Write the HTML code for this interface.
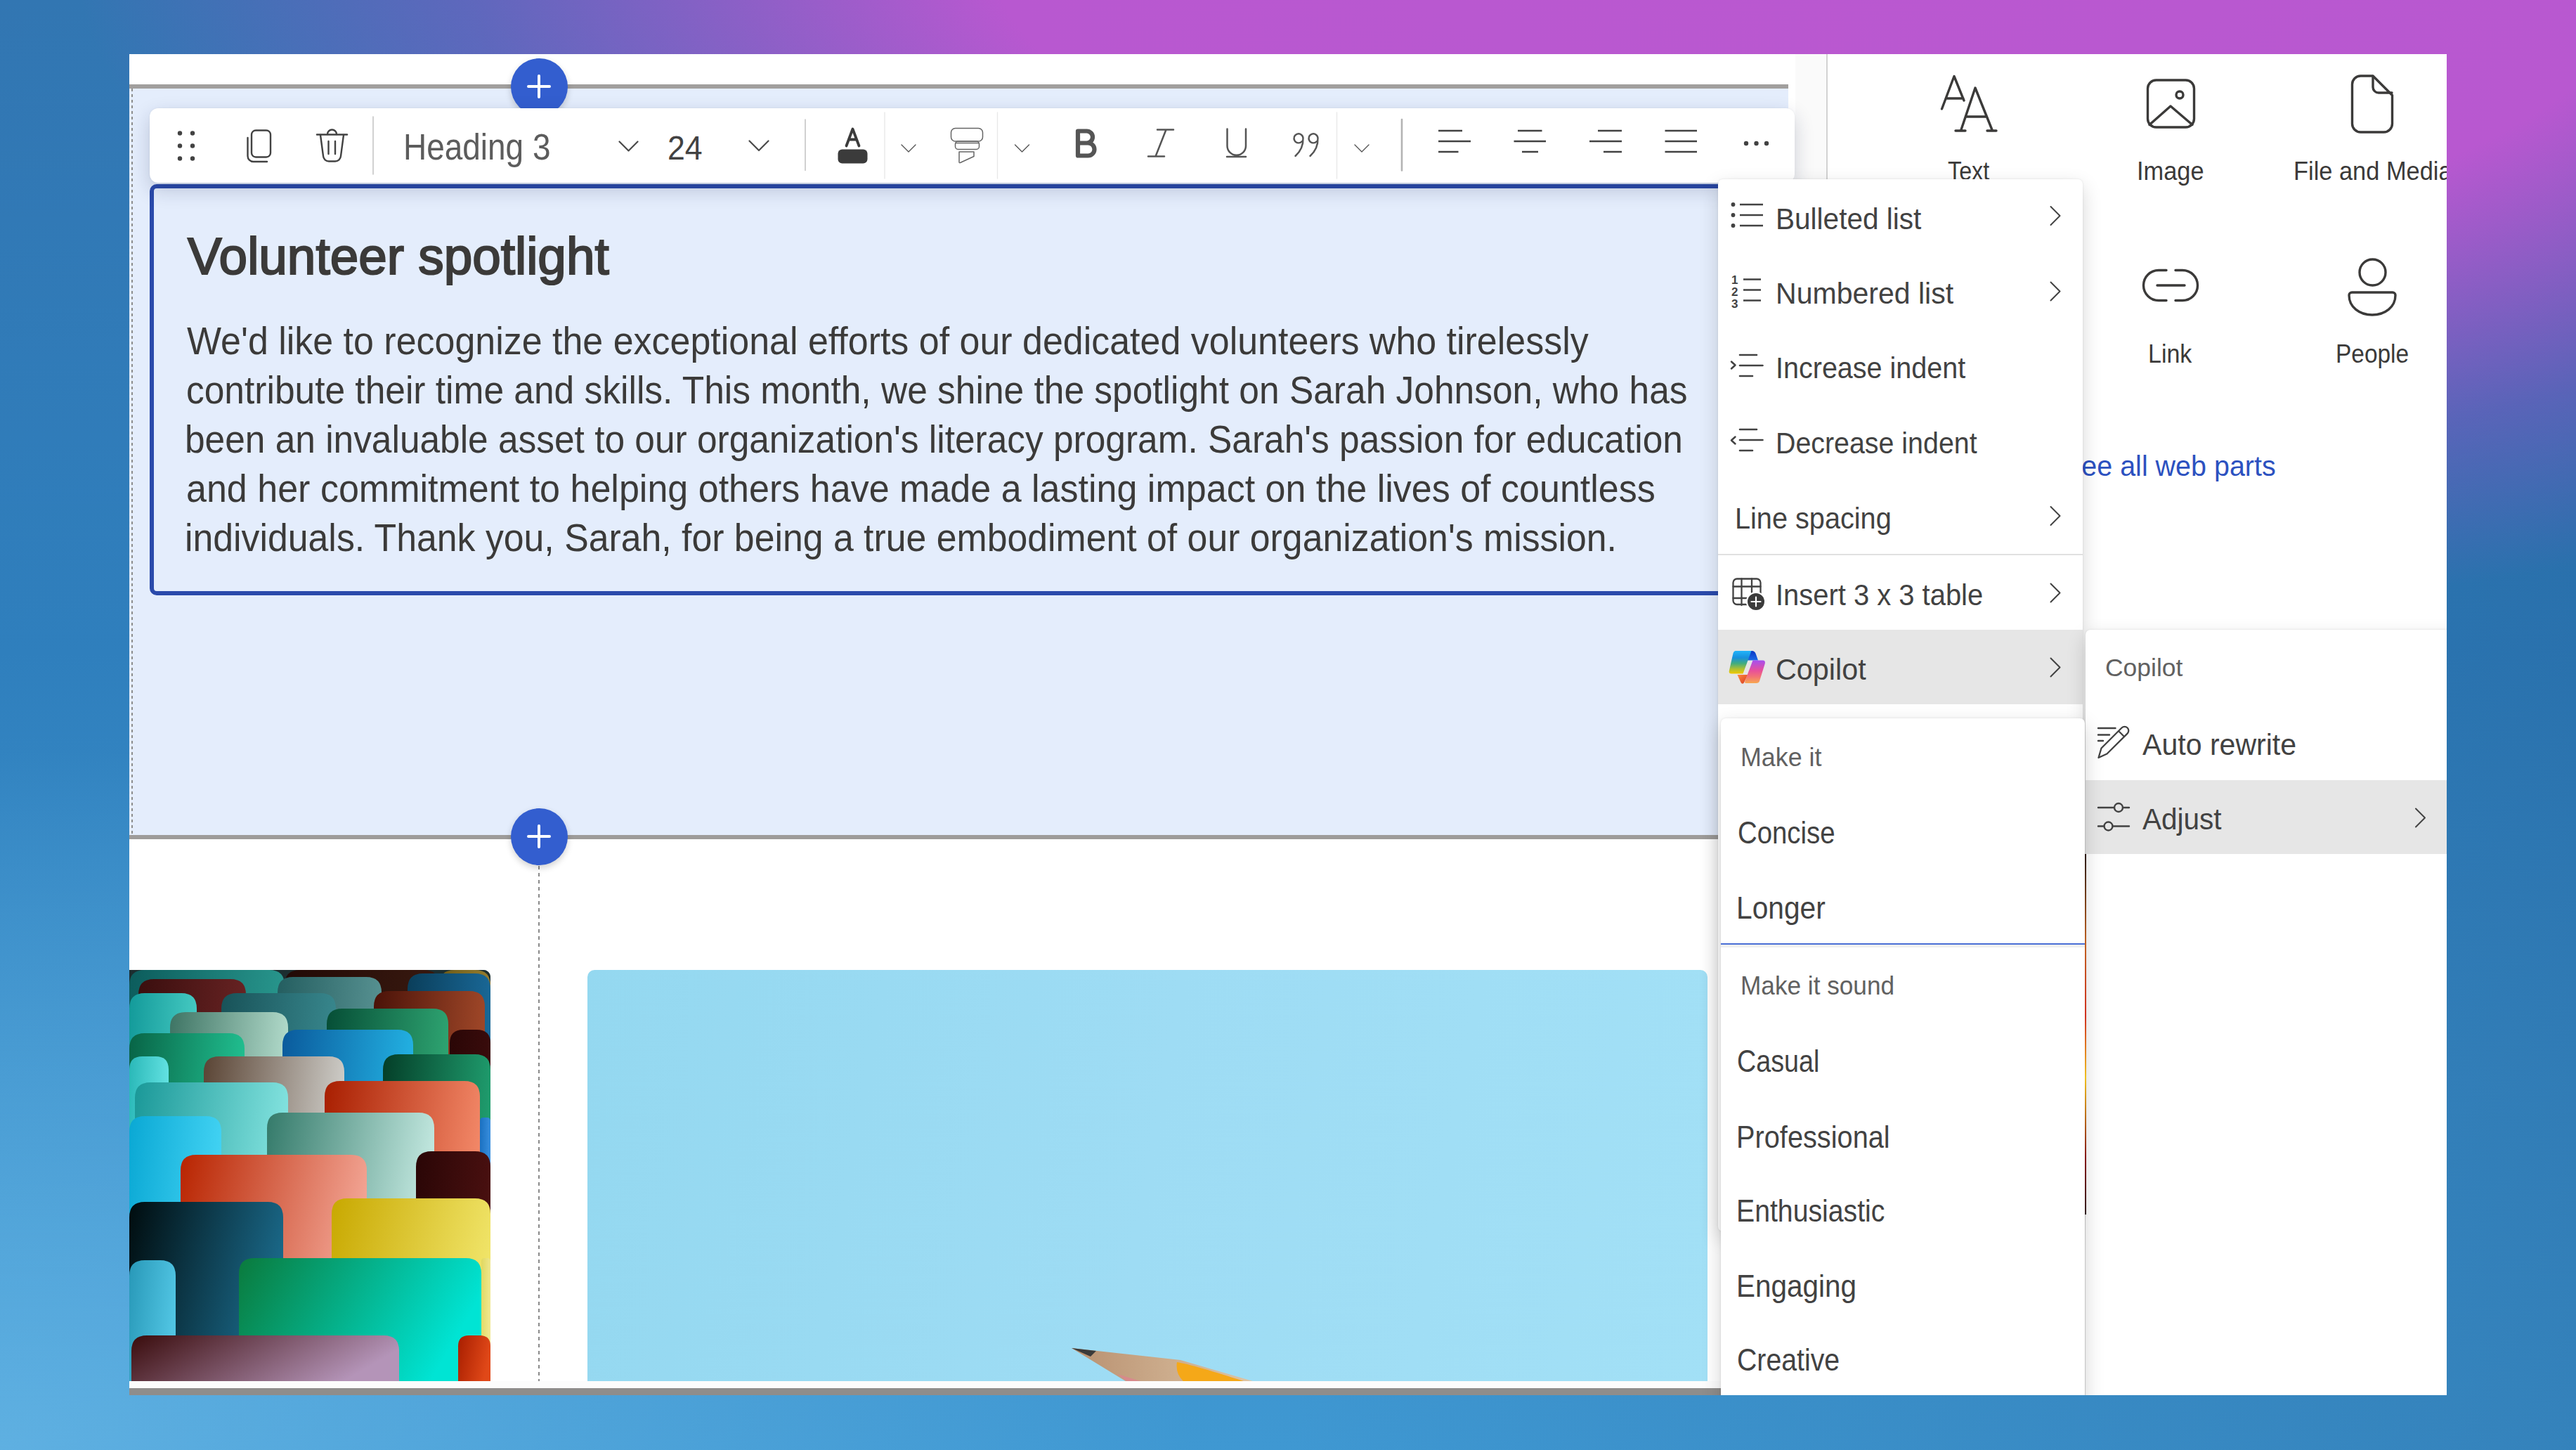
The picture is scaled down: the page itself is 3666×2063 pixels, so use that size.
<!DOCTYPE html><html><head><meta charset="utf-8"><style>

*{margin:0;padding:0;box-sizing:border-box}
html,body{width:3666px;height:2063px;overflow:hidden}
body{position:relative;font-family:"Liberation Sans",sans-serif;
background:
 radial-gradient(ellipse 2500px 1000px at 2600px -100px, rgba(186,88,208,1) 0%, rgba(184,88,208,1) 48%, rgba(160,82,204,0.4) 78%, rgba(150,80,200,0) 100%),
 linear-gradient(90deg, rgba(30,85,140,0) 50%, rgba(30,85,140,0.32) 100%),
 radial-gradient(ellipse 1700px 1000px at 0px 2063px, rgba(100,180,228,0.85) 0%, rgba(100,180,228,0.4) 50%, rgba(100,180,228,0) 100%),
 linear-gradient(180deg, #3276b2 0%, #2f7fbd 45%, #3a8fca 75%, #3f98d2 100%);}
.a{position:absolute}
.t{position:absolute;white-space:nowrap;transform-origin:0 0}
#clip{position:absolute;left:184px;top:77px;width:3298px;height:1908px;overflow:hidden;background:#fff}
#pg{position:absolute;left:-184px;top:-77px;width:3666px;height:2063px}
svg.l{position:absolute;left:0;top:0;width:3666px;height:2063px;overflow:visible}

</style></head><body><div id="clip"><div id="pg">
<div class="a" style="left:184px;top:120px;width:2361px;height:6px;background:#a19f9d"></div>
<div class="a" style="left:184px;top:126px;width:2361px;height:1062px;background:#e4edfc"></div>
<div class="a" style="left:184px;top:1188px;width:2361px;height:6px;background:#9e9c9a"></div>
<div class="a" style="left:2555px;top:77px;width:44px;height:1908px;background:#fafafa"></div>
<div class="a" style="left:2599px;top:77px;width:2px;height:1908px;background:#d2d2d2"></div>
<div class="a" style="left:186.5px;top:126px;width:2px;height:1062px;background:repeating-linear-gradient(#8e8e8e 0 4px,transparent 4px 8px)"></div>
<div class="a" style="left:766px;top:1232px;width:2px;height:733px;background:repeating-linear-gradient(#8a8a8a 0 5px,transparent 5px 10px)"></div>
<div class="a" style="left:184px;top:1380px;width:514px;height:585px;border-radius:0 10px 0 0;overflow:hidden;background:#1a3a3a"><svg class="l" style="left:-184px;top:-1380px" viewBox="0 0 3666 2063"><defs><linearGradient id="ch0" x1="0" y1="0" x2="1" y2="0.3"><stop offset="0" stop-color="#0c5c5c"/><stop offset="1" stop-color="#2a9a90"/></linearGradient><linearGradient id="ch1" x1="0" y1="0" x2="1" y2="0.3"><stop offset="0" stop-color="#220a06"/><stop offset="1" stop-color="#3a1a10"/></linearGradient><linearGradient id="ch2" x1="0" y1="0" x2="1" y2="0.3"><stop offset="0" stop-color="#6a5a18"/><stop offset="1" stop-color="#9a8030"/></linearGradient><linearGradient id="ch3" x1="0" y1="0" x2="1" y2="0.3"><stop offset="0" stop-color="#3a0e0e"/><stop offset="1" stop-color="#6a2424"/></linearGradient><linearGradient id="ch4" x1="0" y1="0" x2="1" y2="0.3"><stop offset="0" stop-color="#245e60"/><stop offset="1" stop-color="#5a9494"/></linearGradient><linearGradient id="ch5" x1="0" y1="0" x2="1" y2="0.3"><stop offset="0" stop-color="#0a3e5a"/><stop offset="1" stop-color="#1a6a9a"/></linearGradient><linearGradient id="ch6" x1="0" y1="0" x2="1" y2="0.3"><stop offset="0" stop-color="#139a9a"/><stop offset="1" stop-color="#48ccc4"/></linearGradient><linearGradient id="ch7" x1="0" y1="0" x2="1" y2="0.3"><stop offset="0" stop-color="#185258"/><stop offset="1" stop-color="#3a8a90"/></linearGradient><linearGradient id="ch8" x1="0" y1="0" x2="1" y2="0.3"><stop offset="0" stop-color="#4a1208"/><stop offset="1" stop-color="#a44a2a"/></linearGradient><linearGradient id="ch9" x1="0" y1="0" x2="1" y2="0.3"><stop offset="0" stop-color="#3e7464"/><stop offset="1" stop-color="#b8e0d0"/></linearGradient><linearGradient id="ch10" x1="0" y1="0" x2="1" y2="0.3"><stop offset="0" stop-color="#064e36"/><stop offset="1" stop-color="#30a874"/></linearGradient><linearGradient id="ch11" x1="0" y1="0" x2="1" y2="0.3"><stop offset="0" stop-color="#2a0606"/><stop offset="1" stop-color="#3a0c0c"/></linearGradient><linearGradient id="ch12" x1="0" y1="0" x2="1" y2="0.3"><stop offset="0" stop-color="#086446"/><stop offset="1" stop-color="#22c494"/></linearGradient><linearGradient id="ch13" x1="0" y1="0" x2="1" y2="0.3"><stop offset="0" stop-color="#0a5a9c"/><stop offset="1" stop-color="#24b6e6"/></linearGradient><linearGradient id="ch14" x1="0" y1="0" x2="1" y2="0.3"><stop offset="0" stop-color="#043e28"/><stop offset="1" stop-color="#20a070"/></linearGradient><linearGradient id="ch15" x1="0" y1="0" x2="1" y2="0.3"><stop offset="0" stop-color="#2ab8b8"/><stop offset="1" stop-color="#66e4e4"/></linearGradient><linearGradient id="ch16" x1="0" y1="0" x2="1" y2="0.3"><stop offset="0" stop-color="#5a4434"/><stop offset="1" stop-color="#d4d4d0"/></linearGradient><linearGradient id="ch17" x1="0" y1="0" x2="1" y2="0.3"><stop offset="0" stop-color="#a81e00"/><stop offset="1" stop-color="#f48a6a"/></linearGradient><linearGradient id="ch18" x1="0" y1="0" x2="1" y2="0.3"><stop offset="0" stop-color="#1a9898"/><stop offset="1" stop-color="#88e6e2"/></linearGradient><linearGradient id="ch19" x1="0" y1="0" x2="1" y2="0.3"><stop offset="0" stop-color="#347a6a"/><stop offset="1" stop-color="#c8ece4"/></linearGradient><linearGradient id="ch20" x1="0" y1="0" x2="1" y2="0.3"><stop offset="0" stop-color="#1a70c0"/><stop offset="1" stop-color="#3a90e0"/></linearGradient><linearGradient id="ch21" x1="0" y1="0" x2="1" y2="0.3"><stop offset="0" stop-color="#0aa8d4"/><stop offset="1" stop-color="#44d4f4"/></linearGradient><linearGradient id="ch22" x1="0" y1="0" x2="1" y2="0.3"><stop offset="0" stop-color="#b82400"/><stop offset="1" stop-color="#f4a898"/></linearGradient><linearGradient id="ch23" x1="0" y1="0" x2="1" y2="0.3"><stop offset="0" stop-color="#2a0606"/><stop offset="1" stop-color="#4a1010"/></linearGradient><linearGradient id="ch24" x1="0" y1="0" x2="1" y2="0.3"><stop offset="0" stop-color="#000c0e"/><stop offset="1" stop-color="#1a6888"/></linearGradient><linearGradient id="ch25" x1="0" y1="0" x2="1" y2="0.3"><stop offset="0" stop-color="#c8a800"/><stop offset="1" stop-color="#f0e468"/></linearGradient><linearGradient id="ch26" x1="0" y1="0" x2="1" y2="0.3"><stop offset="0" stop-color="#2898b8"/><stop offset="1" stop-color="#50c4e2"/></linearGradient><linearGradient id="ch27" x1="0" y1="0" x2="1" y2="0.3"><stop offset="0" stop-color="#e0d860"/><stop offset="1" stop-color="#f0e890"/></linearGradient><linearGradient id="ch28" x1="0" y1="0" x2="1" y2="0.3"><stop offset="0" stop-color="#0a7a3c"/><stop offset="1" stop-color="#00e4d4"/></linearGradient><linearGradient id="ch29" x1="0" y1="0" x2="1" y2="0.3"><stop offset="0" stop-color="#3a0c0c"/><stop offset="1" stop-color="#b494b8"/></linearGradient><linearGradient id="ch30" x1="0" y1="0" x2="1" y2="0.3"><stop offset="0" stop-color="#a81e00"/><stop offset="1" stop-color="#e04818"/></linearGradient></defs><rect x="184" y="1380" width="514" height="585" fill="#1c2e30"/><path d="M184 1966 V1402 Q184 1380 206 1380 H383 Q405 1380 405 1402 V1966 Z" fill="url(#ch0)"/><path d="M405 1966 V1402 Q405 1380 427 1380 H603 Q625 1380 625 1402 V1966 Z" fill="url(#ch1)"/><path d="M625 1966 V1402 Q625 1380 647 1380 H676 Q698 1380 698 1402 V1966 Z" fill="url(#ch2)"/><path d="M197 1966 V1415 Q197 1393 219 1393 H328 Q350 1393 350 1415 V1966 Z" fill="url(#ch3)"/><path d="M395 1966 V1412 Q395 1390 417 1390 H521 Q543 1390 543 1412 V1966 Z" fill="url(#ch4)"/><path d="M580 1966 V1407 Q580 1385 602 1385 H676 Q698 1385 698 1407 V1966 Z" fill="url(#ch5)"/><path d="M184 1966 V1435 Q184 1413 206 1413 H258 Q280 1413 280 1435 V1966 Z" fill="url(#ch6)"/><path d="M315 1966 V1435 Q315 1413 337 1413 H456 Q478 1413 478 1435 V1966 Z" fill="url(#ch7)"/><path d="M532 1966 V1432 Q532 1410 554 1410 H668 Q690 1410 690 1432 V1966 Z" fill="url(#ch8)"/><path d="M242 1966 V1462 Q242 1440 264 1440 H388 Q410 1440 410 1462 V1966 Z" fill="url(#ch9)"/><path d="M465 1966 V1457 Q465 1435 487 1435 H616 Q638 1435 638 1457 V1966 Z" fill="url(#ch10)"/><path d="M640 1966 V1484.3333333333333 Q640 1465 659.3333333333334 1465 H678.6666666666666 Q698 1465 698 1484.3333333333333 V1966 Z" fill="url(#ch11)"/><path d="M184 1966 V1492 Q184 1470 206 1470 H326 Q348 1470 348 1492 V1966 Z" fill="url(#ch12)"/><path d="M402 1966 V1487 Q402 1465 424 1465 H566 Q588 1465 588 1487 V1966 Z" fill="url(#ch13)"/><path d="M545 1966 V1522 Q545 1500 567 1500 H676 Q698 1500 698 1522 V1966 Z" fill="url(#ch14)"/><path d="M184 1966 V1521.6666666666667 Q184 1503 202.66666666666666 1503 H221.33333333333334 Q240 1503 240 1521.6666666666667 V1966 Z" fill="url(#ch15)"/><path d="M290 1966 V1525 Q290 1503 312 1503 H468 Q490 1503 490 1525 V1966 Z" fill="url(#ch16)"/><path d="M462 1966 V1560 Q462 1538 484 1538 H661 Q683 1538 683 1560 V1966 Z" fill="url(#ch17)"/><path d="M192 1966 V1562 Q192 1540 214 1540 H388 Q410 1540 410 1562 V1966 Z" fill="url(#ch18)"/><path d="M380 1966 V1605 Q380 1583 402 1583 H596 Q618 1583 618 1605 V1966 Z" fill="url(#ch19)"/><path d="M683 1966 V1595.0 Q683 1590 688.0 1590 H693.0 Q698 1590 698 1595.0 V1966 Z" fill="url(#ch20)"/><path d="M184 1966 V1610 Q184 1588 206 1588 H293 Q315 1588 315 1610 V1966 Z" fill="url(#ch21)"/><path d="M257 1966 V1665 Q257 1643 279 1643 H500 Q522 1643 522 1665 V1966 Z" fill="url(#ch22)"/><path d="M592 1966 V1660 Q592 1638 614 1638 H676 Q698 1638 698 1660 V1966 Z" fill="url(#ch23)"/><path d="M184 1966 V1732 Q184 1710 206 1710 H381 Q403 1710 403 1732 V1966 Z" fill="url(#ch24)"/><path d="M472 1966 V1727 Q472 1705 494 1705 H676 Q698 1705 698 1727 V1966 Z" fill="url(#ch25)"/><path d="M184 1966 V1815 Q184 1793 206 1793 H228 Q250 1793 250 1815 V1966 Z" fill="url(#ch26)"/><path d="M685 1966 V1794.3333333333333 Q685 1790 689.3333333333334 1790 H693.6666666666666 Q698 1790 698 1794.3333333333333 V1966 Z" fill="url(#ch27)"/><path d="M340 1966 V1812 Q340 1790 362 1790 H663 Q685 1790 685 1812 V1966 Z" fill="url(#ch28)"/><path d="M187 1966 V1922 Q187 1900 209 1900 H546 Q568 1900 568 1922 V1966 Z" fill="url(#ch29)"/><path d="M652 1966 V1915.3333333333333 Q652 1900 667.3333333333334 1900 H682.6666666666666 Q698 1900 698 1915.3333333333333 V1966 Z" fill="url(#ch30)"/></svg></div>
<div class="a" style="left:836px;top:1380px;width:1594px;height:585px;border-radius:10px 10px 0 0;overflow:hidden;background:linear-gradient(100deg,#94d8f0 0%,#9edcf4 50%,#a2e0f6 100%)"><svg class="l" style="left:-836px;top:-1380px" viewBox="0 0 3666 2063"><defs><linearGradient id="wood" x1="0" y1="0" x2="1" y2="0"><stop offset="0" stop-color="#b89070"/><stop offset="1" stop-color="#e0c8a8"/></linearGradient></defs><path d="M1525 1918 L1680 1935 L1800 1970 L1610 1970 Z" fill="url(#wood)"/><path d="M1525 1918 L1560 1922 L1552 1930 Z" fill="#3a3a3a"/><path d="M1675 1938 C1690 1940 1740 1955 1785 1970 L1690 1970 Q1672 1958 1675 1938 Z" fill="#f5a818"/><path d="M1590 1955 L1640 1970 L1610 1970 Z" fill="#e08090" opacity="0.7"/></svg></div>
<div class="a" style="left:184px;top:1965px;width:2265px;height:10px;background:#fcfcfc"></div>
<div class="a" style="left:184px;top:1975px;width:2265px;height:10px;background:#8f8d8b"></div>
<div class="a" style="left:213px;top:262px;width:2300px;height:585px;border:6px solid #2a4aab;border-radius:10px;background:#e4edfc"></div>
<div class="a" style="left:727px;top:83px;width:81px;height:81px;border-radius:50%;background:#335ecf;box-shadow:0 4px 10px rgba(0,0,0,0.18)"></div>
<div class="a" style="left:750px;top:121px;width:34px;height:4px;background:#fff;border-radius:2px"></div>
<div class="a" style="left:765px;top:106px;width:4px;height:34px;background:#fff;border-radius:2px"></div>
<div class="a" style="left:213px;top:154px;width:2341px;height:106px;background:#fff;border-radius:12px;box-shadow:0 10px 28px rgba(20,30,70,0.20),0 0 3px rgba(0,0,0,0.06)"></div>
<div class="a" style="left:727px;top:1150px;width:81px;height:81px;border-radius:50%;background:#335ecf;box-shadow:0 4px 10px rgba(0,0,0,0.18)"></div>
<div class="a" style="left:750px;top:1188px;width:34px;height:4px;background:#fff;border-radius:2px"></div>
<div class="a" style="left:765px;top:1173px;width:4px;height:34px;background:#fff;border-radius:2px"></div>
<svg class="l" viewBox="0 0 3666 2063" fill="none" stroke="#424242" stroke-linecap="round" stroke-linejoin="round"><circle cx="256" cy="189.5" r="3.2" fill="#424242" stroke="none"/><circle cx="256" cy="207.5" r="3.2" fill="#424242" stroke="none"/><circle cx="256" cy="225.5" r="3.2" fill="#424242" stroke="none"/><circle cx="274" cy="189.5" r="3.2" fill="#424242" stroke="none"/><circle cx="274" cy="207.5" r="3.2" fill="#424242" stroke="none"/><circle cx="274" cy="225.5" r="3.2" fill="#424242" stroke="none"/><rect x="358" y="185.5" width="27" height="38" rx="6" stroke-width="2.4"/><path d="M352.5 196 V222 a8 8 0 0 0 8 8 H380" stroke-width="2.4"/><path d="M451 191.5 H494" stroke-width="2.4"/><path d="M466 191 a6.5 6.5 0 0 1 13 0" stroke-width="2.4"/><path d="M456 192 L460 222 a8 8 0 0 0 8 7.5 H477 a8 8 0 0 0 8 -7.5 L489 192" stroke-width="2.4"/><path d="M467.5 201 V219 M477 201 V219" stroke-width="2.4"/><path d="M531 166 V248 M1146 170 V242.5" stroke="#c6c6c6" stroke-width="1.6"/><path d="M1259 160 V254 M1419.5 160 V254 M1902.5 160 V254" stroke="#e8e8e8" stroke-width="1.4"/><path d="M1995 170 V242.5" stroke="#b4b4b4" stroke-width="2.6"/><path d="M881.5 201.5 L894.5 214.5 L907.5 201.5 M1066.5 200.5 L1080 214 L1093.5 200.5" stroke="#4a4a4a" stroke-width="2.2"/><path d="M1283 206 L1293 216 L1303 206" stroke="#555" stroke-width="1.4"/><path d="M1444.5 206 L1454.5 216 L1464.5 206" stroke="#555" stroke-width="1.4"/><path d="M1928 206 L1938 216 L1948 206" stroke="#555" stroke-width="1.4"/><path d="M1204.5 207.5 L1213.5 183.5 L1222.5 207.5 M1208 198.5 H1219" stroke="#3b3b3b" stroke-width="3.8"/><rect x="1192.5" y="212.5" width="42" height="20" rx="6" fill="#3b3b3b" stroke="none"/><g stroke="#666" stroke-width="1.5"><rect x="1353.5" y="182.5" width="45" height="18.5" rx="6"/><rect x="1359.5" y="201" width="34" height="11.5" rx="4"/><path d="M1360 203.5 H1393"/><path d="M1365 216 H1386 V222.5 L1366.5 231.5 Q1365 232 1365 230.5 Z"/></g><path d="M1534 186.5 H1546.5 a8.5 8.5 0 0 1 0 17 H1534 Z M1534 203.5 H1548.5 a9 9 0 0 1 0 18 H1534 Z" stroke="#555" stroke-width="6.2"/><path d="M1647 184.5 H1670 M1634 222.5 H1657 M1659.5 184.5 L1644.5 222.5" stroke="#555" stroke-width="2.5"/><path d="M1746.5 183.5 V207.5 a13.25 13.25 0 0 0 26.5 0 V183.5 M1746 223 H1773" stroke="#555" stroke-width="2.5"/><path d="M1854.5 197 a6.5 6.5 0 1 0 -1.5 4 M1854.5 196 C1855 207 1850 216 1843.5 222" stroke="#555" stroke-width="2.4"/><path d="M1875.5 197 a6.5 6.5 0 1 0 -1.5 4 M1875.5 196 C1876 207 1871 216 1864.5 222" stroke="#555" stroke-width="2.4"/><g stroke-width="2.6" stroke-linecap="butt"><path d="M2047 186 H2081 M2047 201 H2093 M2047 216 H2075.5"/><path d="M2160 186 H2194.5 M2154.5 201 H2200 M2166 216 H2189"/><path d="M2274 186 H2308 M2262 201 H2308 M2282 216 H2308"/><path d="M2369.5 186 H2415 M2369.5 201 H2415 M2369.5 216 H2415"/></g><circle cx="2485" cy="204" r="3.2" fill="#424242" stroke="none"/><circle cx="2499.5" cy="204" r="3.2" fill="#424242" stroke="none"/><circle cx="2514" cy="204" r="3.2" fill="#424242" stroke="none"/><g stroke="#3b3a39" stroke-width="3.4"><path d="M2763.5 155 L2781 108.5 L2795 143 M2770 140 H2794"/><path d="M2790.5 186 L2811 125 L2835.5 186 M2797.5 166 H2826 M2783 186 H2797 M2828 186 H2841"/><rect x="3056.5" y="114" width="66" height="67" rx="12"/><circle cx="3102" cy="135" r="5"/><path d="M3059 177.5 L3089 151 L3120 177.5"/><path d="M3347.5 120 a12 12 0 0 1 12 -12 H3377 L3404.5 135.5 V176 a12 12 0 0 1 -12 12 H3359.5 a12 12 0 0 1 -12 -12 Z"/><path d="M3377 108.5 V124 a8 8 0 0 0 8 8 H3404"/><path d="M3083 384.5 H3072 a21.5 21.5 0 0 0 0 43 H3083 M3096 384.5 H3106 a21.5 21.5 0 0 1 0 43 H3096 M3070 406 H3109"/><circle cx="3376.5" cy="387.5" r="18.5"/><path d="M3347 416 H3405 a4 4 0 0 1 4 4 C3409 437 3394 448 3376 448 C3358 448 3343 437 3343 420 a4 4 0 0 1 4 -4 Z"/></g></svg>
<div class="t" style="left:573.83px;top:177.83px;font-size:50.97px;line-height:64px;font-weight:400;color:#5c5c5c;transform:scaleX(0.9013);">Heading 3</div>
<div class="t" style="left:949.77px;top:180.34px;font-size:48.06px;line-height:60px;font-weight:400;color:#424242;transform:scaleX(0.9293);">24</div>
<div class="t" style="left:267.27px;top:317.75px;font-size:74.27px;line-height:93px;font-weight:400;color:#3b3a39;transform:scaleX(0.9816);-webkit-text-stroke:2.2px #3b3a39;">Volunteer spotlight</div>
<div class="t" style="left:266.48px;top:451.32px;font-size:55.34px;line-height:69px;font-weight:400;color:#3b3a39;transform:scaleX(0.9389);">We'd like to recognize the exceptional efforts of our dedicated volunteers who tirelessly</div>
<div class="t" style="left:264.94px;top:521.32px;font-size:55.34px;line-height:69px;font-weight:400;color:#3b3a39;transform:scaleX(0.9304);">contribute their time and skills. This month, we shine the spotlight on Sarah Johnson, who has</div>
<div class="t" style="left:263.40px;top:591.32px;font-size:55.34px;line-height:69px;font-weight:400;color:#3b3a39;transform:scaleX(0.9293);">been an invaluable asset to our organization's literacy program. Sarah's passion for education</div>
<div class="t" style="left:264.92px;top:661.32px;font-size:55.34px;line-height:69px;font-weight:400;color:#3b3a39;transform:scaleX(0.9403);">and her commitment to helping others have made a lasting impact on the lives of countless</div>
<div class="t" style="left:263.38px;top:731.32px;font-size:55.34px;line-height:69px;font-weight:400;color:#3b3a39;transform:scaleX(0.9358);">individuals. Thank you, Sarah, for being a true embodiment of our organization's mission.</div>
<div class="t" style="left:2771.85px;top:220.27px;font-size:37.57px;line-height:47px;font-weight:400;color:#3b3a39;transform:scaleX(0.8602);">Text</div>
<div class="t" style="left:3041.10px;top:220.27px;font-size:37.57px;line-height:47px;font-weight:400;color:#3b3a39;transform:scaleX(0.9154);">Image</div>
<div class="t" style="left:3057.28px;top:480.47px;font-size:37.57px;line-height:47px;font-weight:400;color:#3b3a39;transform:scaleX(0.9050);">Link</div>
<div class="t" style="left:3324.32px;top:480.47px;font-size:37.57px;line-height:47px;font-weight:400;color:#3b3a39;transform:scaleX(0.8902);">People</div>
<div class="t" style="left:3264.25px;top:220.27px;font-size:37.57px;line-height:47px;font-weight:400;color:#3b3a39;transform:scaleX(0.9154);">File and Media</div>
<div class="t" style="left:2936.37px;top:637.86px;font-size:40.77px;line-height:51px;font-weight:400;color:#2c51c0;transform:scaleX(0.9679);">See all web parts</div>
<div class="a" style="left:2445px;top:255px;width:519px;height:1497px;background:#fff;border-radius:7px;box-shadow:0 0 3px rgba(0,0,0,0.10),0 10px 28px rgba(0,0,0,0.16)"></div><div class="a" style="left:2445px;top:788px;width:519px;height:2px;background:#e0e0e0"></div><div class="a" style="left:2445px;top:896px;width:519px;height:106px;background:#e6e6e6"></div><svg class="l" viewBox="0 0 3666 2063" fill="none" stroke="#424242" stroke-linecap="round" stroke-linejoin="round"><circle cx="2466.5" cy="291" r="2.9" fill="#424242" stroke="none"/><circle cx="2466.5" cy="306" r="2.9" fill="#424242" stroke="none"/><circle cx="2466.5" cy="321" r="2.9" fill="#424242" stroke="none"/><path d="M2476 291 H2509 M2476 306 H2509 M2476 321 H2509" stroke-width="2.5" stroke-linecap="butt"/><g fill="#424242" stroke="none" font-family="Liberation Sans" font-size="17" font-weight="700"><text x="2464" y="404">1</text><text x="2464" y="421">2</text><text x="2464" y="438">3</text></g><path d="M2481 397.5 H2506 M2481 412.5 H2506 M2481 427.5 H2506" stroke-width="2.5" stroke-linecap="butt"/><path d="M2464 514.5 L2469.5 519.5 L2464 524.5" stroke-width="2.5"/><path d="M2476 505 H2500 M2476 520 H2508.5 M2476 535 H2494" stroke-width="2.6"/><path d="M2469.5 621.5 L2464 626.5 L2469.5 631.5" stroke-width="2.5"/><path d="M2476 611 H2500 M2476 626 H2508.5 M2476 641 H2494" stroke-width="2.6"/><path d="M2918.5 294 L2931.5 307 L2918.5 320" stroke-width="2"/><path d="M2918.5 401.5 L2931.5 414.5 L2918.5 427.5" stroke-width="2"/><path d="M2918.5 721 L2931.5 734 L2918.5 747" stroke-width="2"/><path d="M2918.5 830.5 L2931.5 843.5 L2918.5 856.5" stroke-width="2"/><path d="M2918.5 936.5 L2931.5 949.5 L2918.5 962.5" stroke-width="2"/><path d="M2493 860 H2472 a5.5 5.5 0 0 1 -5.5 -5.5 V829 a5.5 5.5 0 0 1 5.5 -5.5 H2500 a5.5 5.5 0 0 1 5.5 5.5 V845" stroke-width="2.3"/><path d="M2478.5 823.5 V861 M2493 823.5 V843 M2466.5 834.5 H2505.5 M2466.5 851 H2486" stroke-width="2.3"/><circle cx="2499" cy="856" r="14" fill="#fff" stroke="none"/><circle cx="2499" cy="856" r="12" fill="#3b3b3b" stroke="none"/><path d="M2499 849.5 V862.5 M2492.5 856 H2505.5" stroke="#fff" stroke-width="2.2"/><defs>
<linearGradient id="cpA" x1="0" y1="0" x2="0" y2="1"><stop offset="0" stop-color="#22b4fa"/><stop offset="0.3" stop-color="#1890dc"/><stop offset="0.55" stop-color="#40ac80"/><stop offset="0.8" stop-color="#b0c030"/><stop offset="1" stop-color="#f2c800"/></linearGradient>
<linearGradient id="cpB" x1="0" y1="0" x2="0" y2="1"><stop offset="0" stop-color="#a64ff0"/><stop offset="0.45" stop-color="#e8509a"/><stop offset="0.7" stop-color="#f27078"/><stop offset="1" stop-color="#f8a850"/></linearGradient>
<linearGradient id="cpC" x1="0" y1="0" x2="0" y2="1"><stop offset="0" stop-color="#0a36c4"/><stop offset="1" stop-color="#1a6ae6"/></linearGradient>
<linearGradient id="cpD" x1="0" y1="0" x2="1" y2="1"><stop offset="0" stop-color="#ff8a40"/><stop offset="1" stop-color="#d83820"/></linearGradient>
</defs><path d="M2486 926 H2493 Q2497.5 926 2499 931 L2502 939.5 H2484 Z" fill="url(#cpC)" stroke="none"/><path d="M2470 926 H2492.5 L2480.5 958.5 H2464 Q2460 958.5 2460.8 954.5 L2466.5 929.5 Q2467.5 926 2470 926 Z" fill="url(#cpA)" stroke="none"/><path d="M2472.5 960 H2487.5 L2481.5 972 Q2479 974 2477.5 971 Z" fill="url(#cpD)" stroke="none"/><path d="M2494.5 939.5 H2508.5 Q2512.8 939.5 2511.8 944 L2504 969 Q2503 972 2499.5 972 H2485 Q2482.5 972 2483.2 969.5 Z" fill="url(#cpB)" stroke="none"/></svg>
<div class="t" style="left:2526.76px;top:283.61px;font-size:42.96px;line-height:54px;font-weight:400;color:#424242;transform:scaleX(0.9441);">Bulleted list</div>
<div class="t" style="left:2526.72px;top:390.11px;font-size:42.96px;line-height:54px;font-weight:400;color:#424242;transform:scaleX(0.9552);">Numbered list</div>
<div class="t" style="left:2527.04px;top:496.11px;font-size:42.96px;line-height:54px;font-weight:400;color:#424242;transform:scaleX(0.9201);">Increase indent</div>
<div class="t" style="left:2527.45px;top:603.11px;font-size:42.96px;line-height:54px;font-weight:400;color:#424242;transform:scaleX(0.9162);">Decrease indent</div>
<div class="t" style="left:2468.83px;top:710.11px;font-size:42.96px;line-height:54px;font-weight:400;color:#424242;transform:scaleX(0.9235);">Line spacing</div>
<div class="t" style="left:2527.01px;top:818.71px;font-size:42.96px;line-height:54px;font-weight:400;color:#424242;transform:scaleX(0.9295);">Insert 3 x 3 table</div>
<div class="t" style="left:2526.93px;top:925.11px;font-size:42.96px;line-height:54px;font-weight:400;color:#424242;transform:scaleX(0.9623);">Copilot</div>
<div class="a" style="left:2968px;top:896px;width:560px;height:1100px;background:#fff;border-radius:7px 0 0 0;box-shadow:0 0 3px rgba(0,0,0,0.10),0 10px 28px rgba(0,0,0,0.16)"></div><div class="a" style="left:2968px;top:1110px;width:560px;height:105px;background:#e6e6e6"></div><svg class="l" viewBox="0 0 3666 2063" fill="none" stroke="#424242" stroke-linecap="round" stroke-linejoin="round"><path d="M2986 1036 H3010.5 M2986 1045.5 H3002 M2986 1054 H2993" stroke-width="2.4"/><path d="M2986.5 1078 L2990.5 1064.5 L3019.5 1035.5 a5.7 5.7 0 0 1 8.1 8.1 L2998.5 1072.5 Z M3015 1040 L3023 1048" stroke-width="2.3"/><path d="M2986 1149 H3009 M3021 1149 H3030 M2986 1175.5 H2994.5 M3006.5 1175.5 H3030" stroke-width="2.4"/><circle cx="3015" cy="1149" r="6" stroke-width="2.4"/><circle cx="3000.5" cy="1175.5" r="6" stroke-width="2.4"/><path d="M3438 1150.5 L3451 1163.5 L3438 1176.5" stroke-width="2"/></svg>
<div class="t" style="left:2995.73px;top:927.63px;font-size:35.68px;line-height:45px;font-weight:400;color:#616161;transform:scaleX(0.9938);">Copilot</div>
<div class="t" style="left:3048.75px;top:1031.61px;font-size:42.96px;line-height:54px;font-weight:400;color:#424242;transform:scaleX(0.9560);">Auto rewrite</div>
<div class="t" style="left:3048.75px;top:1138.11px;font-size:42.96px;line-height:54px;font-weight:400;color:#424242;transform:scaleX(0.9433);">Adjust</div>
<div class="a" style="left:2449px;top:1022px;width:518px;height:1000px;background:#fff;border-radius:7px 7px 0 0;box-shadow:0 0 3px rgba(0,0,0,0.10),0 10px 28px rgba(0,0,0,0.18)"></div><div class="a" style="left:2449px;top:1342px;width:518px;height:2px;background:#4a6fd6"></div><div class="a" style="left:2449px;top:1344px;width:518px;height:4px;background:#f0f0f0"></div><div class="a" style="left:2967px;top:1215px;width:2px;height:513px;background:linear-gradient(#2a1a10 0%,#c06020 25%,#d03020 45%,#f0c020 62%,#801010 85%,#302020 100%)"></div>
<div class="t" style="left:2476.63px;top:1054.13px;font-size:37.13px;line-height:46px;font-weight:400;color:#616161;transform:scaleX(0.9648);">Make it</div>
<div class="t" style="left:2472.58px;top:1157.35px;font-size:43.69px;line-height:55px;font-weight:400;color:#424242;transform:scaleX(0.8779);">Concise</div>
<div class="t" style="left:2471.24px;top:1264.35px;font-size:43.69px;line-height:55px;font-weight:400;color:#424242;transform:scaleX(0.9323);">Longer</div>
<div class="t" style="left:2477.18px;top:1379.13px;font-size:37.13px;line-height:46px;font-weight:400;color:#616161;transform:scaleX(0.9478);">Make it sound</div>
<div class="t" style="left:2472.12px;top:1482.35px;font-size:43.69px;line-height:55px;font-weight:400;color:#424242;transform:scaleX(0.8622);">Casual</div>
<div class="t" style="left:2470.82px;top:1590.35px;font-size:43.69px;line-height:55px;font-weight:400;color:#424242;transform:scaleX(0.9096);">Professional</div>
<div class="t" style="left:2470.86px;top:1695.35px;font-size:43.69px;line-height:55px;font-weight:400;color:#424242;transform:scaleX(0.8974);">Enthusiastic</div>
<div class="t" style="left:2470.76px;top:1802.35px;font-size:43.69px;line-height:55px;font-weight:400;color:#424242;transform:scaleX(0.9257);">Engaging</div>
<div class="t" style="left:2472.04px;top:1907.35px;font-size:43.69px;line-height:55px;font-weight:400;color:#424242;transform:scaleX(0.8986);">Creative</div>
</div></div></body></html>
